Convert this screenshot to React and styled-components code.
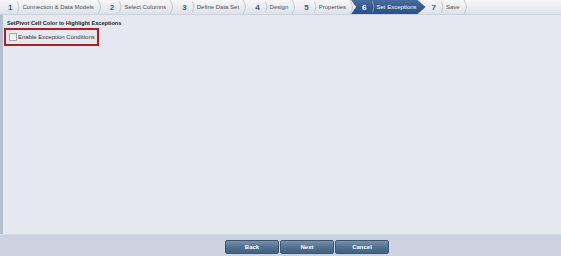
import React from "react";
import styled, { createGlobalStyle } from "styled-components";

const Global = createGlobalStyle`
  html, body { margin: 0; padding: 0; }
  body { width: 561px; height: 256px; overflow: hidden; font-family: "Liberation Sans", Arial, sans-serif; }
  #root { width: 561px; height: 256px; }
`;

const Page = styled.div`
  width: 561px;
  height: 256px;
  display: flex;
  flex-direction: column;
  background: #e5e8f0;
  border-left: 3px solid #b3bece;
  box-sizing: border-box;
`;

const Train = styled.div`
  height: 14px;
  flex: none;
  display: flex;
  align-items: stretch;
  background: linear-gradient(#f6f7f9, #e8ebf0 60%, #dde1e8);
  border-bottom: 1px solid #ccd2dc;
  margin-left: -3px;
  padding-left: 2px;
`;

const Step = styled.div`
  display: flex;
  align-items: center;
  padding: ${(p) => (p.$active ? "0 9px 0 11px" : "0 3px 0 6px")};
  margin-left: ${(p) => (p.$active ? "-5px" : "0")};
  background: ${(p) => (p.$active ? "linear-gradient(#4a6d9f, #365a8e 55%, #2d4f83)" : "transparent")};
  clip-path: ${(p) =>
    p.$active
      ? "polygon(0 0, calc(100% - 8px) 0, 100% 50%, calc(100% - 8px) 100%, 0 100%, 5px 50%)"
      : "none"};
`;

const Num = styled.span`
  font-weight: bold;
  font-size: 8px;
  color: ${(p) => (p.$active ? "#ffffff" : "#3d5b86")};
  margin-right: 5px;
`;

const Label = styled.span`
  font-size: 6px;
  color: ${(p) => (p.$active ? "#ffffff" : "#4a4f58")};
  white-space: nowrap;
  margin-left: 1px;
`;

const SmallSep = ({ active }) => (
  <svg width="4" height="12" viewBox="0 0 4 12" style={{ display: "block" }}>
    <path d="M0.5 0.5 Q3.5 6 0.5 11.5" fill="none" stroke={active ? "#8fa6c8" : "#b4bccb"} strokeWidth="0.8" />
  </svg>
);

const DividerSvg = styled.svg`
  display: block;
  flex: none;
  align-self: stretch;
`;

const Divider = () => (
  <DividerSvg width="7" height="14" viewBox="0 0 7 14">
    <path d="M1 0 Q6 7 1 14" fill="none" stroke="#b0b8c6" strokeWidth="0.9" />
    <path d="M2 0 Q7 7 2 14" fill="none" stroke="#ffffff" strokeWidth="0.7" opacity="0.8" />
  </DividerSvg>
);

const Content = styled.div`
  flex: 1;
  padding: 5px 0 0 4px;
`;

const Title = styled.div`
  font-size: 5.6px;
  font-weight: bold;
  color: #222;
  margin-bottom: 1px;
`;

const Box = styled.div`
  display: inline-flex;
  align-items: center;
  width: 95px;
  height: 18px;
  box-sizing: border-box;
  border: 2px solid #b01e23;
  padding-left: 3px;
  margin-left: -3px;
`;

const Check = styled.span`
  width: 6px;
  height: 6px;
  border: 1px solid #a5a9b0;
  background: linear-gradient(#e8e9ec, #f8f8f9);
  margin-right: 1px;
`;

const CheckText = styled.span`
  font-size: 6px;
  color: #333;
`;

const Footer = styled.div`
  height: 22px;
  flex: none;
  background: #cdd3e1;
  border-top: 1px solid #d8dde7;
  display: flex;
  justify-content: center;
  align-items: flex-start;
  padding: 5px 0 0 53px;
  gap: 1px;
  box-sizing: border-box;
  margin-left: -3px;
`;

const Button = styled.button`
  width: 54px;
  height: 14px;
  border: 1px solid #3c5570;
  border-radius: 2px;
  background: linear-gradient(#7892ad, #52708f 50%, #44617f);
  color: #fff;
  font-family: "Liberation Sans", Arial, sans-serif;
  font-weight: bold;
  font-size: 6px;
  padding: 0;
`;

const steps = [
  "Connection & Data Models",
  "Select Columns",
  "Define Data Set",
  "Design",
  "Properties",
  "Set Exceptions",
  "Save",
];
const ACTIVE = 5;

export default function App() {
  return (
    <>
      <Global />
      <Page>
        <Train>
          {steps.map((s, i) => {
            const active = i === ACTIVE;
            return (
              <React.Fragment key={s}>
                <Step $active={active}>
                  <Num $active={active}>{i + 1}</Num>
                  <SmallSep active={active} />
                  <Label $active={active}>{s}</Label>
                </Step>
                {!active && <Divider />}
              </React.Fragment>
            );
          })}
        </Train>
        <Content>
          <Title>SetPivot Cell Color to Highlight Exceptions</Title>
          <Box>
            <Check />
            <CheckText>Enable Exception Conditions</CheckText>
          </Box>
        </Content>
        <Footer>
          <Button>Back</Button>
          <Button>Next</Button>
          <Button>Cancel</Button>
        </Footer>
      </Page>
    </>
  );
}
